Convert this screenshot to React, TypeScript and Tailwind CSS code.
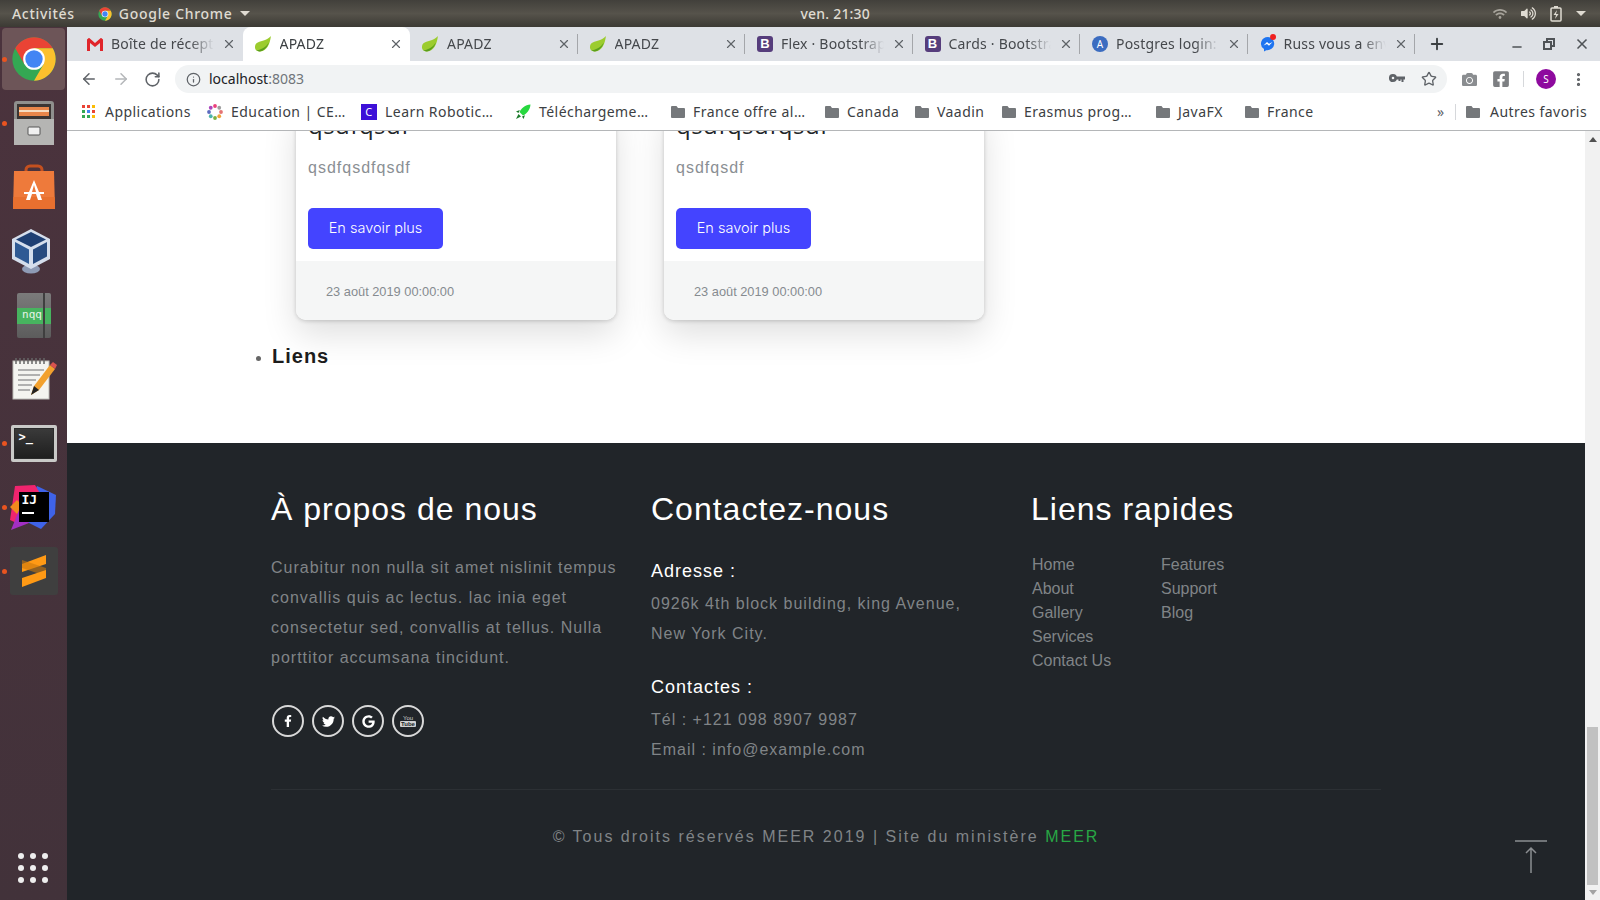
import { ArrowLeft, ArrowRight, RotateCw, Info, Star, X, Plus, Minus, EllipsisVertical } from 'lucide-react';
import { FaCamera, FaFacebookF, FaFacebookSquare, FaGoogle, FaTwitter, FaVolumeUp, FaWifi } from 'react-icons/fa';

const uiFont = "font-['Noto_Sans',sans-serif]";

function ChromeLogo({ size }: { size: number }) {
  return (
    <svg width={size} height={size} viewBox="0 0 48 48">
      <circle cx="24" cy="24" r="20" fill="#34a853" />
      <path d="M41.3 14A20 20 0 0 0 6.7 14l8.6 15L24 14z" fill="#ea4335" />
      <path d="M41.3 14A20 20 0 0 1 24 44l8.7-15L24 14z" fill="#fbc02d" />
      <circle cx="24" cy="24" r="10" fill="#fff" />
      <circle cx="24" cy="24" r="8" fill="#4285f4" />
    </svg>
  );
}

function Leaf() {
  return (
    <svg width="18" height="18" viewBox="0 0 17 17" className="-ml-px shrink-0">
      <path d="M16 1C15 9 12 15 6 15.500 2.500 15.700.5 14 1 10.500 1.600 6 8 6 11 4.500 13 3.500 15 2.500 16 1z" fill="#9ccc2e" />
      <path d="M2 14.500C6 14 11 12 14 7 13 11 9 15.500 5 15.500 4 15.500 3 15.200 2 14.500z" fill="#5a9e1d" />
    </svg>
  );
}

function Gmail() {
  return (
    <svg width="16" height="13" viewBox="0 0 16 13" className="shrink-0">
      <path d="M0 1.500 2-.2 8 5l6-5.200 2 1.700V13h-3V5L8 9 3 5v8H0z" fill="#e0252b" />
    </svg>
  );
}

function BootstrapIcon() {
  return (
    <span className="flex h-4 w-4 shrink-0 items-center justify-center rounded-[3px] bg-[#563d7c] font-['Liberation_Sans',sans-serif] text-[13px] font-bold text-white">B</span>
  );
}

function PostgresIcon() {
  return (
    <span className="flex h-4 w-4 shrink-0 items-center justify-center rounded-full bg-[#3b6cc0] text-[10px] text-white">A</span>
  );
}

function MessengerIcon() {
  return (
    <span className="relative h-4 w-4 shrink-0">
      <svg width="16" height="16" viewBox="0 0 16 16">
        <path d="M8 1a7 6.600 0 0 0-4 12v2.500l2.300-1.300A7 6.600 0 1 0 8 1z" fill="#1e74f0" />
        <path d="M3.500 9.500 7 6l2 1.800L12.500 6 9 9.800 7 8z" fill="#fff" />
      </svg>
      <span className="absolute -top-0.5 right-0 h-1.5 w-1.5 rounded-full bg-[#f02020]" />
    </span>
  );
}

const tabs = [
  { title: 'Boîte de réception', icon: <Gmail /> },
  { title: 'APADZ', icon: <Leaf />, active: true },
  { title: 'APADZ', icon: <Leaf /> },
  { title: 'APADZ', icon: <Leaf /> },
  { title: 'Flex · Bootstrap', icon: <BootstrapIcon /> },
  { title: 'Cards · Bootstrap', icon: <BootstrapIcon /> },
  { title: 'Postgres login: adminer', icon: <PostgresIcon /> },
  { title: 'Russ vous a envoyé', icon: <MessengerIcon /> },
];

function TabStrip() {
  return (
    <div className="flex h-[34px] items-stretch bg-[#dee1e6] pl-2">
      {tabs.map((tab, i) => (
        <div
          key={i}
          className={`flex w-[167.5px] items-center gap-2 pl-3 text-[14px] tracking-[0.2px] ${tab.active ? 'rounded-t-lg bg-white text-[#3c4043]' : 'text-[#45484c]'}`}
        >
          {tab.icon}
          <span className="min-w-0 flex-1 overflow-hidden pb-[2px] whitespace-nowrap [mask-image:linear-gradient(to_left,transparent,black_24px)]">{tab.title}</span>
          <X size={14} strokeWidth={2} className="shrink-0 text-[#5f6368]" />
          <span className={`-ml-[2px] h-5 w-px shrink-0 ${tab.active || i === 0 || tabs[i + 1]?.active ? 'bg-transparent' : 'bg-[#a4a6aa]'}`} />
        </div>
      ))}
      <div className="flex w-[34px] items-center justify-center pl-[10px] text-[#3c4043]">
        <Plus size={18} strokeWidth={2.5} />
      </div>
      <div className="ml-auto flex items-center gap-[19px] pr-[10px] text-[#4f5357]">
        <Minus size={14} strokeWidth={2.5} className="mt-[6px]" />
        <svg width="12" height="12" viewBox="0 0 12 12" fill="none" stroke="currentColor" strokeWidth="2">
          <rect x="1" y="4" width="7" height="7" />
          <path d="M4 3.500V1h7v7H8.500" />
        </svg>
        <X size={16} strokeWidth={2.5} />
      </div>
    </div>
  );
}

function Toolbar() {
  return (
    <div className="flex h-[32px] items-center bg-white pt-[4px] text-[#5f6368]">
      <div className="flex w-[108px] items-center gap-[14px] pl-[13px]">
        <ArrowLeft size={18} strokeWidth={2} />
        <ArrowRight size={18} strokeWidth={2} className="text-[#b4b6b9]" />
        <RotateCw size={17} strokeWidth={2.2} />
      </div>
      <div className="flex h-[28px] w-[1272px] items-center rounded-full bg-[#f1f3f4] pl-[11px] pr-[10px]">
        <Info size={15} strokeWidth={2} />
        <span className="ml-[8px] pb-[2px] text-[14px] text-[#202124]">localhost<span className="text-[#70757a]">:8083</span></span>
        <svg width="16" height="10" viewBox="0 0 16 10" className="ml-auto" fill="#5f6368">
          <path d="M4 0a4 4 0 1 1-.1 8A4 4 0 0 1 4 0zm0 2.700a1.300 1.300 0 1 0 0 2.600 1.300 1.300 0 0 0 0-2.600zM7.500 2.500H16v3h-1.500V8h-2V5.500h-1V7h-2V5.500H7.500z" />
        </svg>
        <Star size={16} strokeWidth={2} className="ml-[16px]" />
      </div>
      <div className="flex flex-1 items-center pl-[15px]">
        <FaCamera size={15} className="text-[#8a8d90]" />
        <FaFacebookSquare size={18} className="ml-[15px] text-[#7d7f82]" />
        <span className="ml-[13px] h-4 w-px bg-[#d6d8db]" />
        <span className="ml-[12px] flex h-5 w-5 items-center justify-center rounded-full bg-[#8e0a9e] text-[10px] text-white">S</span>
        <EllipsisVertical size={17} strokeWidth={2.5} className="ml-[14px] text-[#5a5d61]" />
      </div>
    </div>
  );
}

function Folder() {
  return (
    <svg width="14" height="12" viewBox="0 0 14 12" className="shrink-0" fill="#75787b">
      <path d="M1 0h4.500l1.500 2h6a1 1 0 0 1 1 1v8a1 1 0 0 1-1 1H1a1 1 0 0 1-1-1V1a1 1 0 0 1 1-1z" />
    </svg>
  );
}

function AppsIcon() {
  const colors = ['#ea4335', '#ea4335', '#fbbc05', '#34a853', '#4285f4', '#ea4335', '#34a853', '#34a853', '#fbbc05'];
  return (
    <span className="grid h-[13px] w-[13px] shrink-0 grid-cols-3 gap-[2px]">
      {colors.map((c, i) => (
        <span key={i} style={{ backgroundColor: c }} />
      ))}
    </span>
  );
}

function EducationIcon() {
  const colors = ['#e57373', '#f2a33a', '#7cb342', '#4db6ac', '#5c6bc0', '#ab47bc', '#ec407a', '#9e9e9e'];
  return (
    <svg width="16" height="16" viewBox="0 0 16 16" className="shrink-0">
      {colors.map((c, i) => (
        <circle key={i} cx={8 + 6 * Math.cos((i * Math.PI) / 4)} cy={8 + 6 * Math.sin((i * Math.PI) / 4)} r="1.900" fill={c} />
      ))}
    </svg>
  );
}

function LearnIcon() {
  return (
    <span className="flex h-4 w-4 shrink-0 items-center justify-center bg-[#3d10d8] text-[11px] leading-none text-white">C</span>
  );
}

function Rocket() {
  return (
    <svg width="16" height="16" viewBox="0 0 16 16" className="shrink-0">
      <path d="M15.500.5C10 1 6.500 4 4.500 8l3.500 3.500C12 9.500 15 6 15.500.5z" fill="#27d83f" />
      <path d="M4.800 6 1 7.500 3.500 9zM10 11.200 8.500 15 7 12.500zM3.500 10 1 15l5-2.500z" fill="#1b7a2a" />
    </svg>
  );
}

const bookmarks = [
  { label: 'Applications', icon: <AppsIcon />, gap: 'gap-[10px]', w: 'w-[125px]' },
  { label: 'Education | CE…', icon: <EducationIcon />, gap: 'gap-2', w: 'w-[154px]' },
  { label: 'Learn Robotic…', icon: <LearnIcon />, gap: 'gap-2', w: 'w-[154px]' },
  { label: 'Téléchargeme…', icon: <Rocket />, gap: 'gap-2', w: 'w-[156px]' },
  { label: 'France offre al…', icon: <Folder />, gap: 'gap-2', w: 'w-[154px]' },
  { label: 'Canada', icon: <Folder />, gap: 'gap-2', w: 'w-[90px]' },
  { label: 'Vaadin', icon: <Folder />, gap: 'gap-2', w: 'w-[87px]' },
  { label: 'Erasmus prog…', icon: <Folder />, gap: 'gap-2', w: 'w-[154px]' },
  { label: 'JavaFX', icon: <Folder />, gap: 'gap-2', w: 'w-[89px]' },
  { label: 'France', icon: <Folder />, gap: 'gap-2', w: 'w-[192px]' },
];

function BookmarksBar() {
  return (
    <div className="flex h-[37px] items-center bg-white pl-[15px] text-[14px] tracking-[0.45px] text-[#3c4043]">
      {bookmarks.map((b) => (
        <div key={b.label} className={`flex shrink-0 items-center whitespace-nowrap ${b.gap} ${b.w}`}>
          {b.icon}
          <span>{b.label}</span>
        </div>
      ))}
      <span className="w-[18px] text-[#5f6368]">»</span>
      <span className="h-4 w-px bg-[#d6d8db]" />
      <div className="ml-[10px] flex items-center gap-[10px] whitespace-nowrap">
        <Folder />
        <span>Autres favoris</span>
      </div>
    </div>
  );
}

function DockItem({ running, active, children }: { running?: boolean; active?: boolean; children: React.ReactNode }) {
  return (
    <div className="relative flex h-16 w-full items-center justify-center">
      {active && <span className="absolute inset-x-[2px] inset-y-[1px] rounded bg-[#6d5558]" />}
      {running && <span className="absolute left-[2px] h-[5px] w-[5px] rounded-full bg-[#e95420]" />}
      <span className="relative flex">{children}</span>
    </div>
  );
}

function Dock() {
  return (
    <aside className="flex w-[67px] shrink-0 flex-col bg-linear-to-b from-[#4b333d] to-[#42323a] pb-[17px]">
      <DockItem running active><ChromeLogo size={52} /></DockItem>
      <DockItem running>
        <svg width="42" height="44" viewBox="0 0 42 44">
          <rect x="1" y="0" width="40" height="44" rx="3" fill="#8f8f8d" />
          <rect x="4" y="3" width="34" height="15" fill="#3b3533" />
          <rect x="6" y="6" width="30" height="9" fill="#e8864a" />
          <rect x="6" y="9" width="30" height="2" fill="#f6dcc0" />
          <rect x="1" y="18" width="40" height="26" fill="#b5b5b3" />
          <rect x="15" y="26" width="12" height="8" rx="1" fill="#f0f0f0" stroke="#555" />
        </svg>
      </DockItem>
      <DockItem>
        <svg width="44" height="46" viewBox="0 0 44 46">
          <path d="M14 11V6a4 4 0 0 1 4-4h8a4 4 0 0 1 4 4v5" fill="none" stroke="#c4501f" strokeWidth="3" />
          <path d="M2 7h40l1 38H1z" fill="#ee7a3b" />
          <path d="M1.300 33H42.700L43 45H1z" fill="#e8702f" />
          <path d="M22 16 27 28H32v2H28l2 6H26l-2-6H20l-2 6H14l2-6H12v-2H17zM22 21l-2 7h4z" fill="#fff" fillRule="evenodd" />
        </svg>
      </DockItem>
      <DockItem>
        <svg width="40" height="46" viewBox="0 0 40 46" className="-translate-x-[3px]">
          <ellipse cx="20" cy="41" rx="9" ry="4.500" fill="#8e9bb5" />
          <path d="M20 1 39 11v20L20 41 1 31V11z" fill="#d5deec" />
          <path d="M20 4 35 11.500 20 19 5 11.500z" fill="#1e3f73" />
          <path d="M4 14 18 21.500V36L4 28.500z" fill="#2f5a94" />
          <path d="M36 14 22 21.500V36L36 28.500z" fill="#274b80" />
        </svg>
      </DockItem>
      <DockItem>
        <div className="relative flex h-[45px] w-[34px] items-center justify-center overflow-hidden rounded-[2px] bg-linear-to-b from-[#7b7b7b] to-[#5c5c5c] pt-[1px]">
          <span className="flex h-4 w-full items-center justify-center bg-[#47b45f] pr-[3px] font-['DejaVu_Sans_Mono',monospace] text-[11px] text-[#e8f5e9]">nqq</span>
          <span className="absolute inset-y-0 right-[6px] w-[2px] bg-[#3f3f3f]" />
        </div>
      </DockItem>
      <DockItem>
        <svg width="46" height="44" viewBox="0 0 46 44">
          <rect x="2" y="4" width="36" height="38" fill="#f4f4f0" stroke="#bdbdb8" />
          <path d="M5 1v6M9 1v6M13 1v6M17 1v6M21 1v6M25 1v6M29 1v6M33 1v6" stroke="#666" strokeWidth="1.500" />
          <path d="M7 13h26M7 18h22M7 23h18M7 28h14M7 33h12" stroke="#9a9a9a" strokeWidth="1.500" />
          <path d="M20 38l3-9L39 8l5 4L28 33z" fill="#f2a12e" />
          <path d="M39 8l3-3 4 3-2 4z" fill="#d9534f" />
          <path d="M20 38l3-9 5 4z" fill="#222" />
        </svg>
      </DockItem>
      <DockItem running>
        <div className="flex h-[37px] w-[46px] rounded-[2px] border-[3px] border-[#c9c9c7] bg-[#2b2b2b] p-[1px]">
          <div className="w-full bg-linear-to-b from-[#3a3a3a] to-[#1f1f1f] px-1 font-['DejaVu_Sans_Mono',monospace] text-[12px] leading-[16px] font-bold text-white">&gt;_</div>
        </div>
      </DockItem>
      <DockItem running>
        <span className="relative flex h-12 w-12 items-center justify-center">
          <svg width="48" height="48" viewBox="0 0 48 48" className="absolute inset-0">
            <path d="M27 3l19 9-1 19-14 15-20-10z" fill="#3f63e8" />
            <path d="M5 3l20-1 6 10-20 30-11-5z" fill="#f0246e" />
            <path d="M0 24l7-7 6 6-6 8z" fill="#f08a1d" />
            <path d="M12 20 1 47l18-7z" fill="#a32fc4" />
          </svg>
          <span className="relative flex h-[30px] w-[30px] flex-col bg-black px-[3px] font-['DejaVu_Sans_Mono',monospace] text-[13px] leading-[15px] font-bold text-white">
            IJ
            <span className="mt-[5px] h-[2px] w-3 bg-white" />
          </span>
        </span>
      </DockItem>
      <DockItem running>
        <div className="flex h-12 w-12 items-center justify-center rounded-[3px] bg-[#3f3f3f]">
          <svg width="26" height="32" viewBox="0 0 26 32">
            <path d="M25 0v9L1 17V9z" fill="#ff9a15" />
            <path d="M1 13l24 8v-8L1 5z" fill="#c9780e" opacity=".6" />
            <path d="M25 15v8L1 32v-9z" fill="#ff9a15" />
          </svg>
        </div>
      </DockItem>
      <div className="mt-auto mr-px grid w-fit grid-cols-3 gap-[6px] self-center">
        {Array.from({ length: 9 }).map((_, i) => (
          <span key={i} className="h-[6px] w-[6px] rounded-full bg-[#eeeeee]" />
        ))}
      </div>
    </aside>
  );
}

function NewsCard({ title, text }: { title: string; text: string }) {
  return (
    <div className="w-[320px] overflow-hidden rounded-[10px] bg-white shadow-[0_1px_4px_rgba(0,0,0,0.18),0_14px_34px_rgba(0,0,0,0.13)]">
      <div className="px-3 pb-3">
        <h5 className="font-['Open_Sans',sans-serif] text-[24px] leading-[36px] tracking-[0.5px] text-[#212529]">{title}</h5>
        <p className="mt-[13px] text-[16px] leading-[24px] tracking-[1px] text-[#8a8f94]">{text}</p>
        <button className="mt-[28px] flex h-[41px] w-[135px] items-center justify-center rounded-[5px] bg-[#4444ff] pb-[2px] font-['Inter',sans-serif] text-[14.5px] font-light text-white">
          En savoir plus
        </button>
      </div>
      <div className="flex h-[59px] items-center bg-[#f5f6f6] pt-[3px] pl-[30px] text-[12.8px] text-[#868b90]">23 août 2019 00:00:00</div>
    </div>
  );
}

function Footer() {
  return (
    <footer className="relative h-[457px] shrink-0 bg-[#212529] pt-12 tracking-[1px]">
      <div className="mx-auto w-[1140px] px-[15px]">
        <div className="flex">
          <div className="w-[380px] pr-[30px]">
            <h3 className="text-[32px] leading-[36px] text-white">À propos de nous</h3>
            <p className="mt-[26px] text-[16px] leading-[30px] text-[#808487]">
              Curabitur non nulla sit amet nislinit tempus convallis quis ac lectus. lac inia eget consectetur sed, convallis at tellus. Nulla porttitor accumsana tincidunt.
            </p>
            <div className="mt-8 ml-px flex gap-2">
              {[<FaFacebookF key="f" size={12} />, <FaTwitter key="t" size={13} />, <FaGoogle key="g" size={13} />].map((icon) => (
                <span key={icon.key} className="flex h-8 w-8 items-center justify-center rounded-full border-2 border-[#d8d8d8] text-white">{icon}</span>
              ))}
              <span className="flex h-8 w-8 flex-col items-center justify-center rounded-full border-2 border-[#d8d8d8] text-[6px] leading-[6px] tracking-normal text-[#cfcfcf]">
                You
                <span className="rounded-[1px] bg-[#d0d0d0] px-[1px] font-bold text-[#212529]">Tube</span>
              </span>
            </div>
          </div>
          <div className="w-[380px] pr-[30px]">
            <h3 className="text-[32px] leading-[36px] text-white">Contactez-nous</h3>
            <h6 className="mt-[32px] text-[18px] leading-[24px] text-white">Adresse :</h6>
            <p className="mt-[6px] text-[16px] leading-[30px] text-[#808487]">0926k 4th block building, king Avenue, New York City.</p>
            <h6 className="mt-[26px] text-[18px] leading-[24px] text-white">Contactes :</h6>
            <p className="mt-[6px] text-[16px] leading-[30px] text-[#808487]">
              Tél : +121 098 8907 9987
              <br />
              Email : info@example.com
            </p>
          </div>
          <div className="w-[350px]">
            <h3 className="text-[32px] leading-[36px] text-white">Liens rapides</h3>
            <div className="mt-[26px] flex text-[16px] leading-[24px] tracking-normal text-[#808487]">
              <ul className="w-[130px] pl-px">
                {['Home', 'About', 'Gallery', 'Services', 'Contact Us'].map((l) => <li key={l}>{l}</li>)}
              </ul>
              <ul>
                {['Features', 'Support', 'Blog'].map((l) => <li key={l}>{l}</li>)}
              </ul>
            </div>
          </div>
        </div>
        <div className="mt-[24px] border-t border-white/5 pt-[35px] text-center text-[16px] leading-[24px] tracking-[2px] text-[#808487]">
          © Tous droits réservés MEER 2019 | Site du ministère <span className="text-[#28a745]">MEER</span>
        </div>
      </div>
      {/* back to top */}
      <svg width="32" height="34" viewBox="0 0 32 34" className="absolute bottom-[26px] right-[38px]" fill="none" stroke="#8b8e91" strokeWidth="1.500">
        <path d="M0 1h32M16 33V8M11 13l5-5 5 5" />
      </svg>
    </footer>
  );
}

function Scrollbar() {
  return (
    <div className="flex w-[15px] shrink-0 flex-col items-center bg-[#f1f1f1] pt-[6px]">
      <span className="h-0 w-0 border-x-[4px] border-b-[5px] border-x-transparent border-b-[#505050]" />
      <span className="mt-auto h-[158px] w-[11px] bg-[#c1c1c1]" />
      <span className="mt-[5px] mb-[5px] h-0 w-0 border-x-[4px] border-t-[5px] border-x-transparent border-t-[#a3a3a3]" />
    </div>
  );
}

export default function App() {
  return (
    <div className={`flex h-[900px] w-[1600px] flex-col overflow-hidden font-['Liberation_Sans',sans-serif]`}>
      <header className={`flex h-[27px] shrink-0 items-center bg-linear-to-b from-[#42403b] via-[#56534b] to-[#3c3a34] pl-3 pr-[14px] text-[14px] font-medium tracking-[0.7px] text-[#dfdbd2] ${uiFont}`}>
        <span>Activités</span>
        <span className="ml-[22px] flex items-center gap-[6px]">
          <ChromeLogo size={16} />
          Google Chrome
          <span className="ml-[1px] h-0 w-0 border-x-[5px] border-t-[5px] border-x-transparent border-t-[#dfdbd2]" />
        </span>
        <span className="ml-[551px] tracking-[0.2px]">ven. 21:30</span>
        <span className="ml-auto flex items-center gap-[14px] text-[#dfdbd2]">
          <FaWifi size={14} className="opacity-60" />
          <FaVolumeUp size={15} />
          <svg width="12" height="16" viewBox="0 0 12 16" fill="none">
            <rect x="1" y="2" width="10" height="13" rx="1" stroke="#dfdbd2" strokeWidth="1.500" />
            <rect x="4" y="0" width="4" height="2" fill="#dfdbd2" />
            <path d="M7 4 3.500 9H6l-1 4 3.500-5H6z" fill="#dfdbd2" />
          </svg>
          <span className="h-0 w-0 border-x-[5px] border-t-[5px] border-x-transparent border-t-[#dfdbd2]" />
        </span>
      </header>
      <div className="flex min-h-0 flex-1">
        <Dock />
        <div className="flex min-w-0 flex-1 flex-col">
          <div className={`shrink-0 border-b border-[#b4b6b8] ${uiFont}`}>
            <TabStrip />
            <Toolbar />
            <BookmarksBar />
          </div>
          <div className="flex min-h-0 flex-1">
            <main className="flex min-w-0 flex-1 flex-col">
              <div className="flex min-h-0 flex-1 flex-col justify-end overflow-hidden bg-white pb-[73px]">
                <div className="mx-auto w-[1140px]">
                  <div className="ml-10 flex gap-12">
                    <NewsCard title="qsdfqsdf" text="qsdfqsdfqsdf" />
                    <NewsCard title="qsdfqsdfqsdf" text="qsdfqsdf" />
                  </div>
                  <ul className="mt-[22px] list-disc pl-4 text-[20px] leading-[28px] font-bold tracking-[1px] text-[#1c1c1c] marker:text-[16px] marker:text-[#666]">
                    <li>Liens</li>
                  </ul>
                </div>
              </div>
              <Footer />
            </main>
            <Scrollbar />
          </div>
        </div>
      </div>
    </div>
  );
}
